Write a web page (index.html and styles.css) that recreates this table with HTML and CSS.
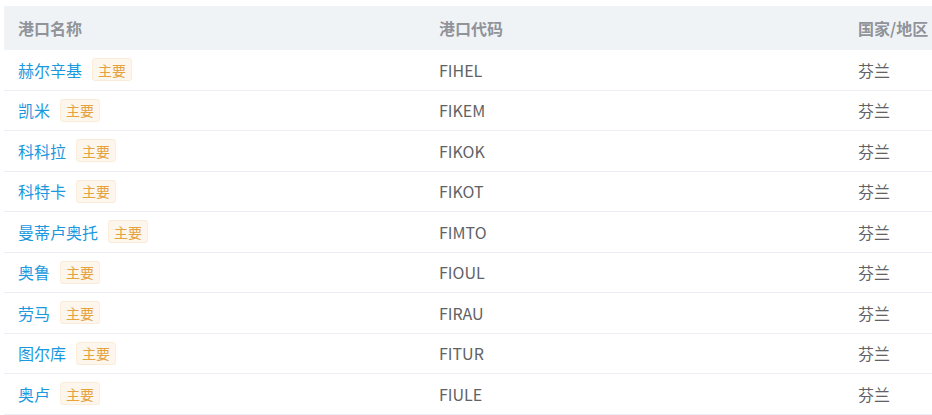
FILE: index.html
```html
<!DOCTYPE html>
<html lang="zh-CN">
<head>
<meta charset="utf-8">
<title>港口列表</title>
<link rel="stylesheet" href="styles.css">
</head>
<body>
<div class="wrap">
  <div class="table">
    <div class="row head">
      <div class="cell">港口名称</div>
      <div class="cell">港口代码</div>
      <div class="cell">国家/地区</div>
    </div>
    <div class="row">
      <div class="cell"><a class="name">赫尔辛基</a><span class="tag">主要</span></div>
      <div class="cell">FIHEL</div>
      <div class="cell">芬兰</div>
    </div>
    <div class="row">
      <div class="cell"><a class="name">凯米</a><span class="tag">主要</span></div>
      <div class="cell">FIKEM</div>
      <div class="cell">芬兰</div>
    </div>
    <div class="row">
      <div class="cell"><a class="name">科科拉</a><span class="tag">主要</span></div>
      <div class="cell">FIKOK</div>
      <div class="cell">芬兰</div>
    </div>
    <div class="row">
      <div class="cell"><a class="name">科特卡</a><span class="tag">主要</span></div>
      <div class="cell">FIKOT</div>
      <div class="cell">芬兰</div>
    </div>
    <div class="row">
      <div class="cell"><a class="name">曼蒂卢奥托</a><span class="tag">主要</span></div>
      <div class="cell">FIMTO</div>
      <div class="cell">芬兰</div>
    </div>
    <div class="row">
      <div class="cell"><a class="name">奥鲁</a><span class="tag">主要</span></div>
      <div class="cell">FIOUL</div>
      <div class="cell">芬兰</div>
    </div>
    <div class="row">
      <div class="cell"><a class="name">劳马</a><span class="tag">主要</span></div>
      <div class="cell">FIRAU</div>
      <div class="cell">芬兰</div>
    </div>
    <div class="row">
      <div class="cell"><a class="name">图尔库</a><span class="tag">主要</span></div>
      <div class="cell">FITUR</div>
      <div class="cell">芬兰</div>
    </div>
    <div class="row">
      <div class="cell"><a class="name">奥卢</a><span class="tag">主要</span></div>
      <div class="cell">FIULE</div>
      <div class="cell">芬兰</div>
    </div>
  </div>
</div>
</body>
</html>
```

FILE: styles.css
```css
html, body {
  margin: 0;
  padding: 0;
  background: #ffffff;
  overflow: hidden;
}

body {
  font-family: "Noto Sans CJK SC", "Noto Sans", sans-serif;
  font-size: 16px;
  color: #606266;
}

.wrap {
  padding: 6px 0 0 4px;
}

.table {
  width: 928px;
}

.row {
  display: grid;
  grid-template-columns: 421px 419px 1fr;
  height: 40.5px;
  box-sizing: border-box;
  border-bottom: 1px solid #ebeef5;
}

.row.head {
  height: 44px;
  background: #f0f3f6;
  border-bottom: none;
  color: #909399;
  font-weight: bold;
}

.cell {
  display: flex;
  align-items: center;
  padding-left: 14px;
  white-space: nowrap;
  min-width: 0;
}

.name {
  color: #1a98e0;
  cursor: pointer;
}

.tag {
  display: inline-flex;
  align-items: center;
  box-sizing: border-box;
  height: 23px;
  margin-left: 10px;
  padding: 0 5px;
  font-size: 14px;
  color: #e6a23c;
  background: #fdf6ec;
  border: 1px solid #faecd8;
  border-radius: 3px;
}
```
